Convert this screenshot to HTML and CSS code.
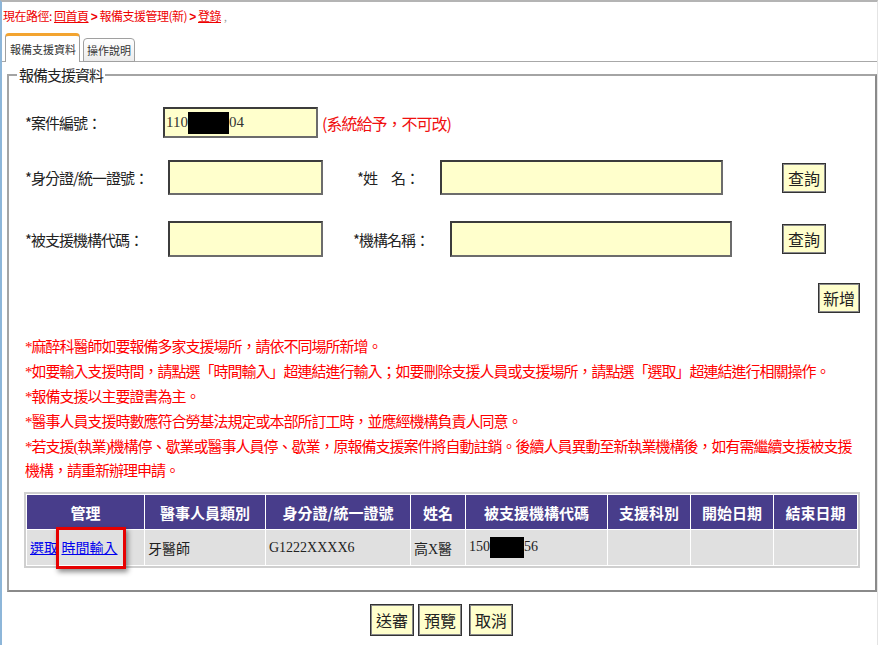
FILE: index.html
```html
<!DOCTYPE html>
<html lang="zh-Hant">
<head>
    <meta charset="UTF-8">
    <title>報備支援管理(新) - 登錄</title>
    <link rel="stylesheet" href="styles.css">
</head>
<body>

<div class="page">
    <!-- breadcrumb -->
    <div class="crumb">現在路徑: <a href="#">回首頁</a> <b>&gt;</b> 報備支援管理(新) <b>&gt;</b> <a href="#">登錄</a><span class="tick">,</span></div>

    <!-- tabs -->
    <div class="tabs">
        <div class="tab active">報備支援資料</div>
        <div class="tab">操作說明</div>
    </div>

    <fieldset class="box">
        <legend>報備支援資料</legend>
        <div class="form">
            <div class="row row-case">
                <label class="lbl lbl-case">*案件編號：</label>
                <div class="field field-case">110<span class="redact"></span>04</div>
                <span class="hint">(系統給予，不可改)</span>
            </div>

            <div class="row row-id">
                <label class="lbl">*身分證/統一證號：</label>
                <input class="field field-short" type="text">
                <label class="lbl lbl-name">*姓　名：</label>
                <input class="field field-name" type="text">
                <button class="btn btn-query">查詢</button>
            </div>

            <div class="row row-org">
                <label class="lbl">*被支援機構代碼：</label>
                <input class="field field-short" type="text">
                <label class="lbl lbl-org">*機構名稱：</label>
                <input class="field field-org" type="text">
                <button class="btn btn-query2">查詢</button>
            </div>

            <div class="add-row">
                <button class="btn">新增</button>
            </div>

            <div class="notes">
                <div class="note">*麻醉科醫師如要報備多家支援場所，請依不同場所新增。</div>
                <div class="note">*如要輸入支援時間，請點選「時間輸入」超連結進行輸入；如要刪除支援人員或支援場所，請點選「選取」超連結進行相關操作。</div>
                <div class="note">*報備支援以主要證書為主。</div>
                <div class="note">*醫事人員支援時數應符合勞基法規定或本部所訂工時，並應經機構負責人同意。</div>
                <div class="note">*若支援(執業)機構停、歇業或醫事人員停、歇業，原報備支援案件將自動註銷。後續人員異動至新執業機構後，如有需繼續支援被支援機構，請重新辦理申請。</div>
            </div>

            <table class="grid">
                <colgroup>
                    <col class="c-manage">
                    <col class="c-type">
                    <col class="c-id">
                    <col class="c-name">
                    <col class="c-org">
                    <col class="c-dept">
                    <col class="c-date">
                    <col>
                </colgroup>
                <tr>
                    <th>管理</th>
                    <th>醫事人員類別</th>
                    <th>身分證/統一證號</th>
                    <th>姓名</th>
                    <th>被支援機構代碼</th>
                    <th>支援科別</th>
                    <th>開始日期</th>
                    <th>結束日期</th>
                </tr>
                <tr>
                    <td><a href="#">選取</a> <span class="mark"><a href="#">時間輸入</a></span></td>
                    <td>牙醫師</td>
                    <td>G1222XXXX6</td>
                    <td>高X醫</td>
                    <td>150<span class="redact redact-sm"></span>56</td>
                    <td></td>
                    <td></td>
                    <td></td>
                </tr>
            </table>
        </div>
    </fieldset>

    <div class="actions">
        <button class="btn">送審</button>
        <button class="btn">預覽</button>
        <button class="btn btn-cancel">取消</button>
    </div>
</div>

</body>
</html>
```

FILE: styles.css
```css
* {
    box-sizing: border-box;
}

body {
    margin: 0;
    background-color: #fff;
}

.page {
    width: 878px;
    min-height: 645px;
    border-left: 2px solid #8db6d9;
    border-top: 2px solid #b4b4b4;
    border-right: 1px solid #e4e4e4;
    font-family: "Liberation Serif", "Noto Sans CJK TC", serif;
    color: #222;
}

/* breadcrumb */
.crumb {
    padding: 4px 0 0 1px;
    height: 26px;
    line-height: 20px;
    font-size: 12px;
    letter-spacing: -0.5px;
    color: #ee0000;
    font-family: "Noto Sans CJK TC", sans-serif;
}

.crumb a {
    color: #ee0000;
}

.crumb b {
    font-family: "Liberation Sans", sans-serif;
}

.crumb .tick {
    color: #999;
    font-size: 10px;
    margin-left: 3px;
}

/* tabs */
.tabs {
    display: flex;
    align-items: flex-end;
    margin-top: 5px;
    height: 29px;
    padding-left: 3px;
    border-bottom: 1px solid #a8a8a8;
}

.tab {
    font-family: "Noto Sans CJK TC", sans-serif;
    font-size: 11px;
    height: 24px;
    line-height: 22px;
    padding: 0 3px;
    margin-right: 3px;
    margin-bottom: -1px;
    border: 1px solid #a0a0a0;
    border-radius: 4px 4px 0 0;
    background: linear-gradient(#ffffff, #ececec);
    color: #333;
}

.tab.active {
    height: 29px;
    line-height: 26px;
    padding: 0 3px 0 4px;
    border-top: 3px solid #f3a430;
    border-bottom: none;
    background: #fff;
}

/* main box */
.box {
    margin: 3px 2px 0 5px;
    padding: 0;
    border: 2px solid #a4a4a4;
    border-right-color: #8a8a8a;
    border-bottom-color: #8a8a8a;
}

.box legend {
    margin-left: 8px;
    padding: 0 2px;
    font-family: "Noto Sans CJK TC", sans-serif;
    font-size: 15px;
    letter-spacing: -1px;
    line-height: 20px;
}

.form {
    padding: 22px 15px 22px 16px;
}

.row {
    display: flex;
    align-items: center;
    font-family: "Noto Sans CJK TC", sans-serif;
    font-size: 15px;
    letter-spacing: -1px;
}

.row-id {
    margin-top: 22px;
}

.row-org {
    margin-top: 26px;
}

.lbl {
    width: 143px;
    flex-shrink: 0;
}

.lbl-case {
    width: 138px;
}

.lbl-name {
    width: 83px;
    margin-left: 34px;
}

.lbl-org {
    width: 97px;
    margin-left: 30px;
}

.field {
    flex-shrink: 0;
    background-color: #ffffcc;
    border: 2px solid #4a4a4a;
    border-color: #3c3c3c #6c6c6c #6c6c6c #3c3c3c;
    outline: none;
}

.field-case {
    width: 155px;
    height: 31px;
    display: flex;
    align-items: center;
    padding-left: 1px;
    font-family: "Liberation Serif", serif;
    font-size: 15px;
    letter-spacing: 0;
    color: #333;
}

.field-short {
    width: 155px;
}

.row-id .field {
    height: 35px;
}

.row-org .field {
    height: 36px;
}

.field-name {
    width: 283px;
}

.field-org {
    width: 282px;
}

.redact {
    display: inline-block;
    width: 41px;
    height: 22px;
    background-color: #000;
}

.hint {
    margin-left: 4px;
    color: #f01010;
    font-size: 16px;
    letter-spacing: -1px;
}

.btn {
    width: 44px;
    height: 30px;
    padding: 0;
    background-color: #ffffcc;
    border: 1px solid #333;
    box-shadow: inset 0 0 0 1px #8a8a8a;
    font-family: "Noto Sans CJK TC", sans-serif;
    font-size: 16px;
    letter-spacing: 0;
    color: #222;
    cursor: pointer;
}

.btn-query {
    margin-left: 59px;
}

.btn-query2 {
    margin-left: 50px;
}

.add-row {
    display: flex;
    justify-content: flex-end;
    margin-top: 26px;
}

.add-row .btn {
    width: 42px;
}

/* notes */
.notes {
    margin-top: 22px;
    font-family: "Liberation Serif", "Noto Sans CJK TC", serif;
    font-size: 15px;
    letter-spacing: -1px;
    line-height: 24px;
    color: #ff0000;
}

.note {
    margin-bottom: 1px;
}

/* result table */
.grid {
    margin: 9px 0 0 -1px;
    width: 836px;
    table-layout: fixed;
    border-collapse: separate;
    border-spacing: 1px;
    border: 2px solid #cfcfcf;
    background-color: #fff;
    font-size: 14px;
}

.c-manage { width: 117px; }
.c-type { width: 120px; }
.c-id { width: 144px; }
.c-name { width: 54px; }
.c-org { width: 141px; }
.c-dept { width: 82px; }
.c-date { width: 82px; }

.grid th {
    height: 34px;
    padding: 0;
    background-color: #483d8b;
    color: #fff;
    font-family: "Noto Sans CJK TC", sans-serif;
    font-size: 15px;
    font-weight: bold;
}

.grid td {
    height: 35px;
    padding: 0 3px;
    background-color: #e0e0e0;
    color: #222;
    white-space: nowrap;
}

.grid td a {
    color: #0000ee;
    font-family: "Noto Sans CJK TC", sans-serif;
}

.redact-sm {
    width: 34px;
    height: 21px;
    vertical-align: middle;
}

/* annotation around the time link */
.mark {
    position: relative;
    display: inline-block;
    line-height: 20px;
}

.mark::after {
    content: "";
    position: absolute;
    left: -6px;
    right: -8px;
    top: -10px;
    bottom: -10px;
    border: 3px solid #e60000;
    box-shadow: 2px 3px 5px rgba(0, 0, 0, 0.45);
}

.actions {
    margin-top: 12px;
    padding-left: 4px;
    text-align: center;
}

.actions .btn {
    height: 32px;
    margin: 0;
}

.actions .btn-cancel {
    margin-left: 3px;
}
```
